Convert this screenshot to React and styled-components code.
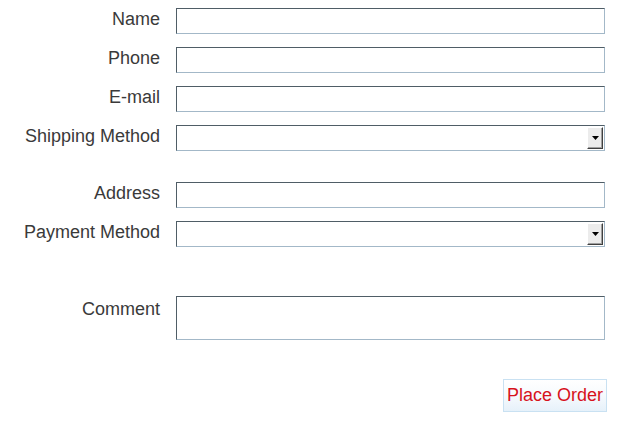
import React from 'react';
import styled, {createGlobalStyle} from 'styled-components';

const GlobalStyle = createGlobalStyle`
  body {
    margin: 8px 0 0 0;
    background: #ffffff;
    font-family: "Liberation Sans", Arial, sans-serif;
  }
`;

const fields = [
  {label: 'Name', kind: 'input'},
  {label: 'Phone', kind: 'input'},
  {label: 'E-mail', kind: 'input'},
  {label: 'Shipping Method', kind: 'select'},
  {label: 'Address', kind: 'input', space: 18},
  {label: 'Payment Method', kind: 'select'},
  {label: 'Comment', kind: 'textarea', space: 36},
];

const App = () => {
  return (
    <>
      <GlobalStyle />
      <Form>
        {fields.map((f) => (
          <Row key={f.label} $space={f.space || 0}>
            <Label $tall={f.kind === 'textarea'}>{f.label}</Label>
            {f.kind === 'select' ? (
              <Field>
                <DropButton>
                  <svg width="7" height="4" viewBox="0 0 7 4">
                    <polygon points="0,0 7,0 3.5,4" fill="#000" />
                  </svg>
                </DropButton>
              </Field>
            ) : (
              <Field $tall={f.kind === 'textarea'} />
            )}
          </Row>
        ))}
        <Actions>
          <OrderButton>Place Order</OrderButton>
        </Actions>
      </Form>
    </>
  );
};

export default App;

const Form = styled.div`
  display: flex;
  flex-direction: column;
  width: 605px;
`;

const Row = styled.div`
  display: flex;
  flex-direction: row;
  align-items: flex-start;
  gap: 16px;
  margin-top: ${(p) => p.$space}px;
  margin-bottom: 13px;
`;

const Label = styled.div`
  width: 160px;
  text-align: right;
  font-size: 18px;
  line-height: 20px;
  color: #3a3a3a;
  padding-top: ${(p) => (p.$tall ? 3 : 1)}px;
`;

const Field = styled.div`
  box-sizing: border-box;
  width: 429px;
  height: ${(p) => (p.$tall ? 44 : 26)}px;
  border-style: solid;
  border-width: 1px;
  border-color: #4f5d66 #a3b8c8 #a3b8c8 #4f5d66;
  background: #ffffff;
  display: flex;
  justify-content: flex-end;
  align-items: stretch;
  padding: 1px;
`;

const DropButton = styled.div`
  box-sizing: border-box;
  width: 16px;
  background: #ececec;
  border-style: solid;
  border-width: 1px;
  border-color: #ffffff #404040 #404040 #ffffff;
  box-shadow: inset -1px -1px 0 #a0a0a0;
  display: flex;
  align-items: center;
  justify-content: center;
`;

const Actions = styled.div`
  display: flex;
  justify-content: flex-end;
  margin-top: 26px;
  margin-right: -2px;
`;

const OrderButton = styled.button`
  box-sizing: border-box;
  width: 104px;
  height: 33px;
  padding: 0;
  border: 1px solid #c9e1f2;
  background: linear-gradient(to bottom, #ffffff 0%, #f6fafd 50%, #e6f1fa 100%);
  color: #d7121c;
  font-family: "Liberation Sans", Arial, sans-serif;
  font-size: 18px;
  cursor: pointer;
`;
